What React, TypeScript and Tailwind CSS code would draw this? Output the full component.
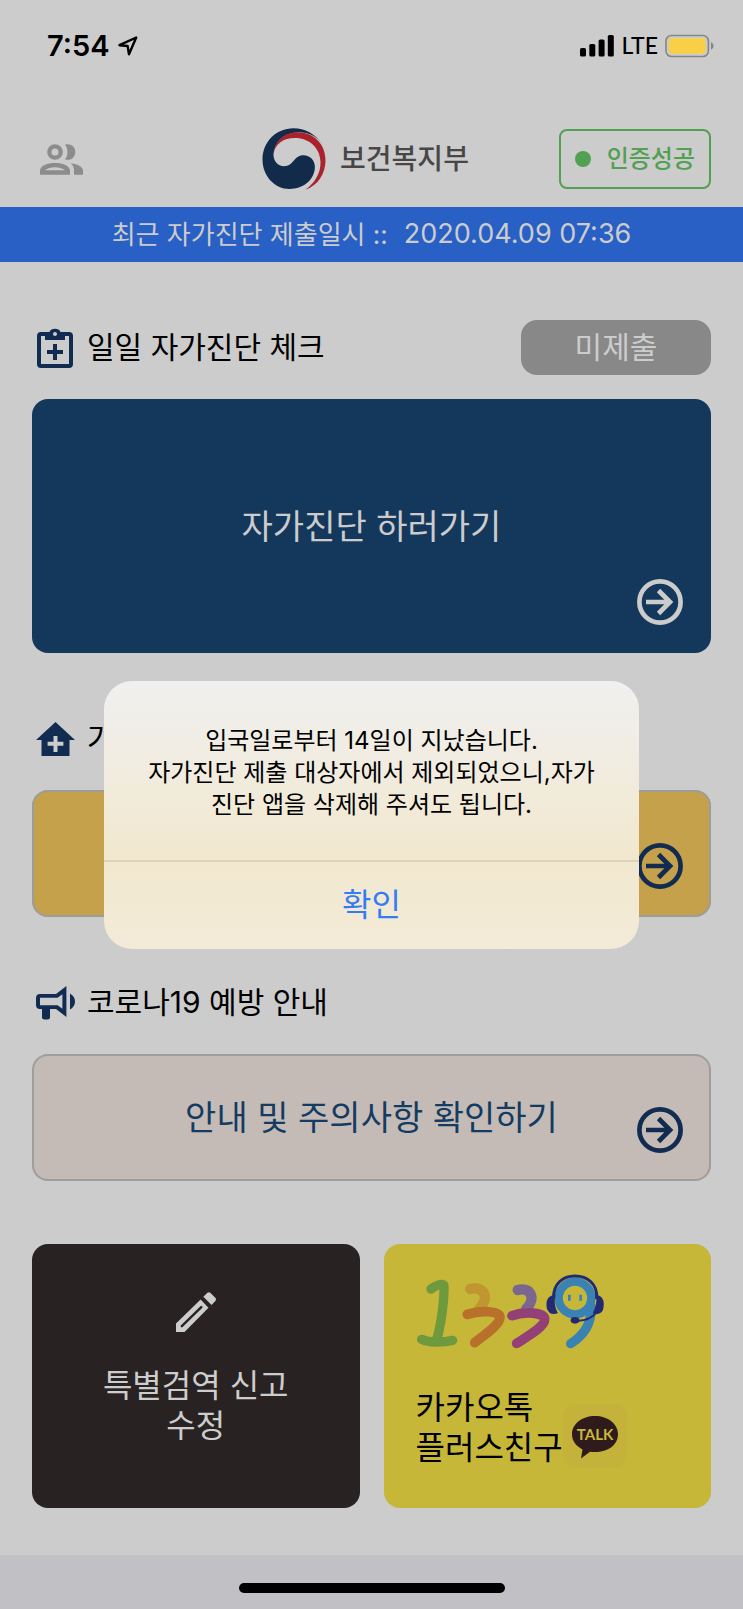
import React, { useState } from 'react';

const FONT = "font-['Inter','Noto_Sans_CJK_KR',sans-serif]";

function LocationIcon() {
  return (
    <svg viewBox="0 0 20 20" className="h-5 w-5" fill="none" stroke="#000" strokeWidth="2.4" strokeLinejoin="round">
      <path d="M18.2 1.5 L1.5 9.2 L9.6 10 L11 18.3 Z" />
    </svg>
  );
}

function SignalIcon() {
  return (
    <svg viewBox="0 0 34 22" className="h-[22px] w-[34px]" fill="#000">
      <rect x="0" y="13" width="6" height="8.5" rx="1.6" />
      <rect x="9.3" y="9" width="6" height="12.5" rx="1.6" />
      <rect x="18.6" y="4.5" width="6" height="17" rx="1.6" />
      <rect x="27.8" y="0" width="6" height="21.5" rx="1.6" />
    </svg>
  );
}

function BatteryIcon() {
  return (
    <svg viewBox="0 0 50 24" className="h-6 w-[50px]">
      <rect x="1" y="1.5" width="42.4" height="21" rx="5.5" fill="none" stroke="#858585" strokeWidth="1.6" />
      <rect x="3.8" y="4.2" width="36.8" height="15.6" rx="3" fill="#f9cf46" />
      <path d="M46 8 Q48.6 9.5 48.6 12 Q48.6 14.5 46 16 Z" fill="#858585" />
    </svg>
  );
}

function PeopleIcon() {
  return (
    <svg viewBox="120 431 129 93" className="h-[31px] w-[43px]" fill="#8c8c8c">
      <circle cx="165" cy="455" r="17" fill="none" stroke="#8c8c8c" strokeWidth="13" />
      <path
        fillRule="evenodd"
        d="M120 523 V512 C120 496 142 488 165 488 C188 488 210 496 210 512 V523 Z M135 510 H195 C188 504 176 501 165 501 C154 501 142 504 135 510 Z"
      />
      <path d="M195 433 C213 427 226 440 226 455 C226 470 213 483 195 477 C205 465 205 445 195 433 Z" />
      <path d="M212 489 C235 492 249 500 249 512 V523 H222 V510 C222 501 219 495 212 489 Z" />
    </svg>
  );
}

function Emblem() {
  return (
    <svg viewBox="786 383 192 187" className="h-[62px] w-16">
      <path
        fill="#122b4a"
        d="M968 432 C945 400 915 384 880 384 C828 384 787 426 787 478 C787 528 824 567 868 567 C912 567 945 537 945 500 C945 480 930 465 911 465 C880 465 882 498 852 498 C833 498 820 483 820 462 C824 425 850 398 893 396 C925 395 950 408 968 432 Z"
      />
      <path
        fill="#aa222c"
        d="M820 462 C824 425 850 396 893 396 C940 396 977 430 977 480 C977 520 955 555 917 569 C945 548 962 520 962 487 C962 445 930 413 885 413 C850 413 825 430 820 462 Z"
      />
    </svg>
  );
}

function ClipboardPlusIcon() {
  return (
    <svg viewBox="0 0 36 40" className="h-10 w-9" fill="#112c50">
      <path
        fillRule="evenodd"
        d="M4 4 H12.4 A6 5 0 0 1 23.6 4 H32 A4 4 0 0 1 36 8 V36 A4 4 0 0 1 32 40 H4 A4 4 0 0 1 0 36 V8 A4 4 0 0 1 4 4 Z M4 8 V36 H32 V8 H28 V12 H8 V8 Z M18 4 A2 2 0 1 0 18 8 A2 2 0 1 0 18 4 Z"
      />
      <path d="M16 16 H20 V22 H26 V26 H20 V32 H16 V26 H10 V22 H16 Z" />
    </svg>
  );
}

function HousePlusIcon() {
  return (
    <svg viewBox="0 0 39 34" className="h-[34px] w-[39px]" fill="#112c50">
      <path
        fillRule="evenodd"
        d="M19.5 0 L39 18 H33.5 V34 H5.5 V18 H0 Z M17.5 14 V19.8 H11.6 V23.8 H17.5 V30 H21.5 V23.8 H27.4 V19.8 H21.5 V14 Z"
      />
    </svg>
  );
}

function MegaphoneIcon() {
  return (
    <svg viewBox="0 0 39 34" className="h-[34px] w-[39px]" fill="#112c50">
      <path
        fillRule="evenodd"
        d="M4 8 H20 L30.4 0 V31 L20 23 H14 V31 A2.5 2.5 0 0 1 11.5 33.5 H8.5 A2.5 2.5 0 0 1 6 31 V23 H4 A4 4 0 0 1 0 19 V12 A4 4 0 0 1 4 8 Z M4 11.8 V19.2 H21.6 L26.4 22.8 V8.2 L21.6 11.8 Z"
      />
      <path d="M34 7.5 Q39 10.5 39 15.5 Q39 20.5 34 23.5 Z" />
    </svg>
  );
}

function PencilIcon() {
  return (
    <svg viewBox="528 186 117 117" className="h-10 w-10" fill="#cdcdcd">
      <path d="M528 278 L600 208 L623 232 L553 303 H528 Z" />
      <path d="M608 200 L619 189 Q624 184 629 189 L643 203 Q647 208 643 212 L632 224 Z" />
      <path d="M545 286 L602 230" fill="none" stroke="#282222" strokeWidth="7" strokeLinecap="round" />
    </svg>
  );
}

function ArrowCircle({ color }: { color: string }) {
  return (
    <svg viewBox="0 0 46 46" className="absolute right-7 bottom-7 h-[46px] w-[46px]" fill="none" stroke={color} strokeWidth="4.7">
      <circle cx="23" cy="23" r="20.6" />
      <path d="M9 23 H33 M21.5 11.5 L33 23 L21.5 34.5" />
    </svg>
  );
}

function CallCenterLogo() {
  return (
    <svg viewBox="48 40 567 225" className="h-[75px] w-[189px]" fill="none" strokeLinecap="round" strokeLinejoin="round" role="img" aria-label="1339">
      <g stroke="#6f993d" strokeWidth="28">
        <path d="M93 85 C108 73 131 66 132 76 C133 110 125 190 109 240" />
        <path d="M65 236 Q84 245 109 244 Q136 244 158 239" />
      </g>
      <path stroke="#c1952f" strokeWidth="31" d="M211 85 C252 76 270 110 239 142" />
      <path stroke="#b8702a" strokeWidth="29" d="M202 161 C240 148 300 150 300 170 C300 192 255 222 224 246" />
      <path stroke="#7a6790" strokeWidth="31" d="M353 88 C391 78 410 112 379 144" />
      <path stroke="#924075" strokeWidth="29" d="M336 165 C375 150 434 156 434 176 C434 198 390 223 350 248" />
      <g>
        <path stroke="#3a82b4" strokeWidth="28" d="M572 135 C577 185 553 223 512 249" />
        <circle cx="525" cy="112" r="49" stroke="#3a82b4" strokeWidth="25" />
        <path stroke="#3a82b4" strokeWidth="8" d="M508 102 V120 M542 102 V120" strokeLinecap="butt" />
        <path stroke="#212a72" strokeWidth="9" d="M461 112 C459 70 488 46 525 46 C562 46 593 70 590 112" />
        <path fill="#212a72" d="M466 102 C442 105 436 120 441 145 C448 162 462 163 474 157 C464 140 462 120 466 102 Z" />
        <path fill="#212a72" d="M591 102 C610 108 615 122 609 148 C603 160 592 162 578 158 C588 140 590 120 591 102 Z" />
        <path stroke="#212a72" strokeWidth="6" d="M590 156 Q565 182 530 180" />
        <ellipse cx="525" cy="179" rx="13" ry="10" fill="#212a72" />
      </g>
    </svg>
  );
}

function TalkIcon() {
  return (
    <svg viewBox="0 0 64 64" className="h-16 w-16 rounded-xl bg-[#c4b23a]">
      <path
        fill="#2f1b1b"
        d="M32 12 C45 12 55 20 55 30 C55 41 45 48 32 48 Q29 48 27 47.7 L18 54.5 L19.5 45.5 C13 42 9 37 9 30 C9 20 19 12 32 12 Z"
      />
      <text x="32" y="36" textAnchor="middle" fill="#c9b83a" className="font-['Lato',sans-serif] text-[15px] font-bold">TALK</text>
    </svg>
  );
}

function SectionTitle({ icon, title, children }: { icon: React.ReactNode; title: string; children?: React.ReactNode }) {
  return (
    <div className="mt-[58px] mb-6 flex h-[55px] items-center">
      <span className="ml-[3px] flex w-10 justify-center">{icon}</span>
      <h2 className="ml-3 flex-1 text-[30px] text-black">{title}</h2>
      {children}
    </div>
  );
}

export default function App() {
  const [open, setOpen] = useState(true);

  return (
    <div className={`relative flex min-h-screen flex-col bg-[#cccccc] ${FONT}`}>
      {/* status bar */}
      <div className="mb-5 flex h-[91px] items-center justify-between pr-7 pl-[47px]">
        <div className="flex items-center gap-2">
          <span className="text-[29px] font-semibold">7:54</span>
          <LocationIcon />
        </div>
        <div className="flex items-center gap-[7px]">
          <SignalIcon />
          <span className="font-['Lato',sans-serif] text-[23px] font-medium">LTE</span>
          <BatteryIcon />
        </div>
      </div>

      <header className="grid h-24 grid-cols-[1fr_auto_1fr] items-center px-8">
        <button type="button" aria-label="사용자" className="ml-2 justify-self-start">
          <PeopleIcon />
        </button>
        <div className="flex items-center gap-3.5 pr-3">
          <Emblem />
          <h1 className="text-[28px] font-medium text-[#474747]">보건복지부</h1>
        </div>
        <div className="flex h-[60px] items-center gap-4 justify-self-end rounded-lg border-2 border-[#52a052] px-3.5 text-[#52a052]">
          <span className="h-4 w-4 rounded-full bg-[#52a052]" />
          <span className="text-[24px] font-medium">인증성공</span>
        </div>
      </header>

      <p className="flex h-[55px] items-center justify-center gap-4 bg-[#2860c5] text-[#cccccc]">
        <span className="text-[26px]">최근 자가진단 제출일시 ::</span>
        <span className="text-[27px]">2020.04.09 07:36</span>
      </p>

      <main className="flex-1 px-8 pb-[47px]">
        <SectionTitle icon={<ClipboardPlusIcon />} title="일일 자가진단 체크">
          <span className="flex h-[55px] w-[190px] items-center justify-center rounded-2xl bg-[#888888] text-[30px] text-[#cccccc]">
            미제출
          </span>
        </SectionTitle>
        <button type="button" className="relative block h-[254px] w-full rounded-2xl bg-[#14385c] text-[34px] text-[#cccccc]">
          자가진단 하러가기
          <ArrowCircle color="#cccccc" />
        </button>

        <SectionTitle icon={<HousePlusIcon />} title="가" />
        <button type="button" aria-label="바로가기" className="relative block h-[127px] w-full rounded-2xl bg-[#c4a14a] inset-ring-2 inset-ring-[#9d9d9b]">
          <ArrowCircle color="#112c50" />
        </button>

        <SectionTitle icon={<MegaphoneIcon />} title="코로나19 예방 안내" />
        <button type="button" className="relative block h-[127px] w-full rounded-2xl bg-[#c5bbb6] text-[34px] text-[#143b62] inset-ring-2 inset-ring-[#a09e9d]">
          안내 및 주의사항 확인하기
          <ArrowCircle color="#112c50" />
        </button>

        <div className="mt-[63px] grid grid-cols-2 gap-6">
          <button type="button" className="flex h-[264px] flex-col items-center justify-start gap-[34px] rounded-2xl bg-[#282222] pt-12 text-[32px] leading-10 text-[#cdcdcd]">
            <PencilIcon />
            <span>특별검역 신고<br />수정</span>
          </button>
          <button type="button" className="flex h-[264px] flex-col items-start justify-start gap-[39px] rounded-2xl bg-[#c6b738] px-8 pt-[30px] text-left text-[32px] leading-10 text-black">
            <CallCenterLogo />
            <span className="flex items-end">
              <span>카카오톡<br />플러스친구</span>
              <TalkIcon />
            </span>
          </button>
        </div>
      </main>

      <footer className="flex h-[54px] items-center justify-center bg-[#c1c0c5] pt-3">
        <span className="h-2.5 w-[266px] rounded-full bg-black" />
      </footer>

      {open && (
        <div className="absolute inset-0 flex items-center justify-center pt-5">
          <div
            role="alertdialog"
            aria-describedby="notice"
            className="w-[535px] overflow-hidden rounded-[28px] bg-linear-to-b from-[#f0f0f0] via-[#f2e8cf] via-65% to-[#f3ebd8]"
          >
            <p id="notice" className="border-b-2 border-[#ded3b8] pt-11 pb-[39px] text-center text-[24px] leading-8 text-black">
              입국일로부터 14일이 지났습니다.<br />
              자가진단 제출 대상자에서 제외되었으니,자가<br />
              진단 앱을 삭제해 주셔도 됩니다.
            </p>
            <button type="button" onClick={() => setOpen(false)} className="h-[87px] w-full text-[32px] text-[#347cf6]">
              확인
            </button>
          </div>
        </div>
      )}
    </div>
  );
}
